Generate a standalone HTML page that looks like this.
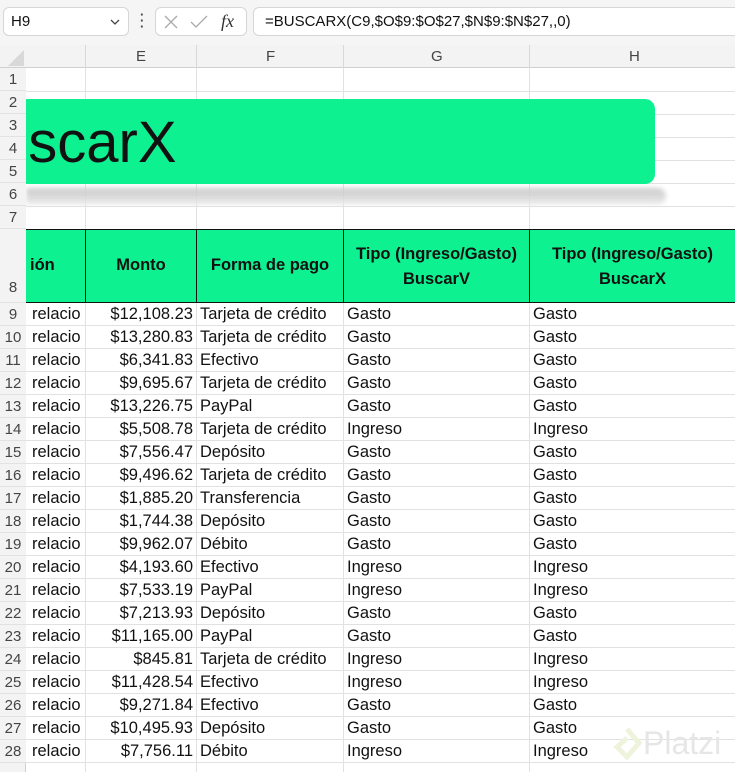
<!DOCTYPE html>
<html><head><meta charset="utf-8"><style>
*{margin:0;padding:0;box-sizing:border-box}
body{width:735px;height:772px;overflow:hidden;background:#fff;font-family:"Liberation Sans",sans-serif;position:relative;color:#111}
.a{position:absolute}
.rh{position:absolute;left:0;width:26px;background:#f3f3f3;color:#444;font-size:15px;text-align:center;border-bottom:1px solid #e2e2e2}
.hl{position:absolute;left:26px;right:0;height:1px;background:#e1e1e1}
.vl{position:absolute;width:1px;background:#e1e1e1}
.c{position:absolute;font-size:16.5px;height:23px;line-height:23px;white-space:nowrap;overflow:hidden;color:#111}
.hd{position:absolute;font-weight:bold;font-size:16.5px;color:#111}
</style></head><body>
<div class="a" style="left:0;top:0;width:735px;height:45px;background:#f5f5f5"></div>
<div class="a" style="left:3px;top:7px;width:126px;height:29px;border:1px solid #d6d6d6;border-radius:6px;background:#fff;font-size:15px;line-height:27px;padding-left:7px">H9<svg class="a" style="left:106px;top:11px" width="10" height="6"><path d="M1 1L5 5L9 1" stroke="#444" stroke-width="1.3" fill="none"/></svg></div>
<div class="a" style="left:140px;top:12px;width:3px;height:18px;color:#444;font-size:13px;line-height:6px;font-weight:bold">·<br>·<br>·</div>
<div class="a" style="left:155px;top:7px;width:92px;height:29px;border:1px solid #d6d6d6;border-radius:6px;background:#fff">
<svg class="a" style="left:8px;top:7px" width="14" height="14"><path d="M1 1L13 13M13 1L1 13" stroke="#aaa" stroke-width="1.3"/></svg>
<svg class="a" style="left:34px;top:7px" width="18" height="14"><path d="M1 7L6 12L17 1" stroke="#aaa" stroke-width="1.3" fill="none"/></svg>
<span class="a" style="left:65px;top:3px;font-family:'Liberation Serif',serif;font-style:italic;font-size:18px;color:#333">fx</span></div>
<div class="a" style="left:253px;top:7px;width:490px;height:29px;border:1px solid #d6d6d6;border-radius:6px;background:#fff;font-size:15px;line-height:27px;padding-left:11px">=BUSCARX(C9,$O$9:$O$27,$N$9:$N$27,,0)</div>
<div class="a" style="left:0;top:45px;width:735px;height:23px;background:#f3f3f3;border-bottom:1px solid #cfcfcf;font-size:15px;color:#444">
<svg class="a" style="left:8px;top:5px" width="16" height="16"><path d="M16 0L16 16L0 16Z" fill="#d8d8d8"/></svg>
<span class="a" style="left:136px;top:3px">E</span><span class="a" style="left:266px;top:3px">F</span><span class="a" style="left:431px;top:3px">G</span><span class="a" style="left:629px;top:3px">H</span>
<div class="vl" style="left:85px;top:0;height:23px;background:#d8d8d8"></div><div class="vl" style="left:196px;top:0;height:23px;background:#d8d8d8"></div><div class="vl" style="left:343px;top:0;height:23px;background:#d8d8d8"></div><div class="vl" style="left:529px;top:0;height:23px;background:#d8d8d8"></div>
</div>
<div class="hl" style="top:91px"></div><div class="hl" style="top:114px"></div><div class="hl" style="top:137px"></div><div class="hl" style="top:160px"></div><div class="hl" style="top:183px"></div><div class="hl" style="top:206px"></div>
<div class="vl" style="left:85px;top:68px;height:704px"></div><div class="vl" style="left:196px;top:68px;height:704px"></div><div class="vl" style="left:343px;top:68px;height:704px"></div><div class="vl" style="left:529px;top:68px;height:704px"></div>
<div class="a" style="left:26px;top:188px;width:640px;height:17px;background:linear-gradient(#c4c4c4,#d4d4d4 50%,#ececec);filter:blur(2.5px);border-radius:0 10px 10px 0;opacity:.85"></div>
<div class="a" style="left:26px;top:99px;width:629px;height:85px;background:#0ef191;border-radius:0 10px 10px 0"></div>
<div class="a" style="left:-4px;top:110px;font-size:58px;line-height:66px;color:#111">uscarX</div>
<div class="a" style="left:0;top:68px;width:26px;height:704px;background:#f3f3f3;border-right:1px solid #d0d0d0"></div>
<div class="a" style="left:26px;top:229px;width:709px;height:74px;background:#0ef191;border-top:1px solid #111;border-bottom:1px solid #111"></div>
<div class="a" style="left:85px;top:229px;width:1px;height:74px;background:#111"></div><div class="a" style="left:196px;top:229px;width:1px;height:74px;background:#111"></div><div class="a" style="left:343px;top:229px;width:1px;height:74px;background:#111"></div><div class="a" style="left:529px;top:229px;width:1px;height:74px;background:#111"></div>
<div class="hd" style="left:30px;top:256px">ión</div>
<div class="hd" style="left:86px;width:110px;text-align:center;top:256px">Monto</div>
<div class="hd" style="left:197px;width:146px;text-align:center;top:256px">Forma de pago</div>
<div class="hd" style="left:344px;width:185px;text-align:center;top:242px;line-height:25px">Tipo (Ingreso/Gasto)<br>BuscarV</div>
<div class="hd" style="left:530px;width:205px;text-align:center;top:242px;line-height:25px">Tipo (Ingreso/Gasto)<br>BuscarX</div>
<div id="rows"></div>
<div class="a" style="left:643px;top:725px;font-size:32px;color:#e6e6e6">Platzi</div>
<svg class="a" style="left:612px;top:726px" width="30" height="36"><path d="M15 3L27 17L15 31L5 21L15 12" stroke="#eef3dc" stroke-width="5" fill="none"/></svg>
<script>
var h='';
for(var i=0;i<7;i++){h+='<div class="rh" style="top:'+(68+i*23)+'px;height:23px;line-height:23px">'+(i+1)+'</div>'}
h+='<div class="rh" style="top:229px;height:74px;line-height:118px">8</div>';
var d=[["$12,108.23","Tarjeta de crédito","Gasto","Gasto"],["$13,280.83","Tarjeta de crédito","Gasto","Gasto"],["$6,341.83","Efectivo","Gasto","Gasto"],["$9,695.67","Tarjeta de crédito","Gasto","Gasto"],["$13,226.75","PayPal","Gasto","Gasto"],["$5,508.78","Tarjeta de crédito","Ingreso","Ingreso"],["$7,556.47","Depósito","Gasto","Gasto"],["$9,496.62","Tarjeta de crédito","Gasto","Gasto"],["$1,885.20","Transferencia","Gasto","Gasto"],["$1,744.38","Depósito","Gasto","Gasto"],["$9,962.07","Débito","Gasto","Gasto"],["$4,193.60","Efectivo","Ingreso","Ingreso"],["$7,533.19","PayPal","Ingreso","Ingreso"],["$7,213.93","Depósito","Gasto","Gasto"],["$11,165.00","PayPal","Gasto","Gasto"],["$845.81","Tarjeta de crédito","Ingreso","Ingreso"],["$11,428.54","Efectivo","Ingreso","Ingreso"],["$9,271.84","Efectivo","Gasto","Gasto"],["$10,495.93","Depósito","Gasto","Gasto"],["$7,756.11","Débito","Ingreso","Ingreso"]];
for(var r=0;r<20;r++){var t=303+r*23;
h+='<div class="rh" style="top:'+t+'px;height:23px;line-height:23px">'+(9+r)+'</div>';
h+='<div class="hl" style="top:'+(t+22)+'px"></div>';
h+='<div class="c" style="left:32px;top:'+t+'px;width:53px">relacio</div>';
h+='<div class="c" style="left:86px;top:'+t+'px;width:107px;text-align:right">'+d[r][0]+'</div>';
h+='<div class="c" style="left:200px;top:'+t+'px;width:143px">'+d[r][1]+'</div>';
h+='<div class="c" style="left:347px;top:'+t+'px">'+d[r][2]+'</div>';
h+='<div class="c" style="left:533px;top:'+t+'px">'+d[r][3]+'</div>';}
document.getElementById('rows').innerHTML=h;
</script>
</body></html>
